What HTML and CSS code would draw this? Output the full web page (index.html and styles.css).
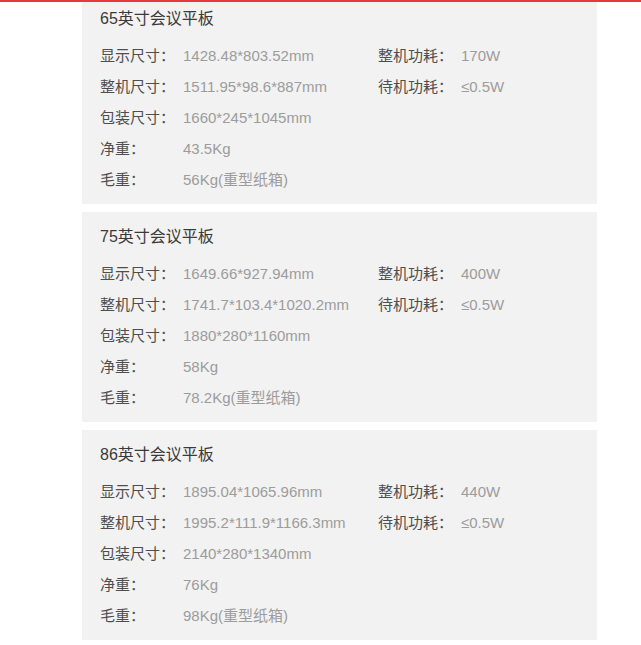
FILE: index.html
```html
<!DOCTYPE html>
<html lang="zh">
<head>
<meta charset="utf-8">
<title>会议平板参数</title>
<link rel="stylesheet" href="styles.css">
</head>
<body>
<div class="topbar"></div>
<main class="list">
  <section class="card">
    <h2 class="title">65英寸会议平板</h2>
    <div class="specs">
      <div class="item"><span class="label">显示尺寸：</span><span class="value">1428.48*803.52mm</span></div>
      <div class="item"><span class="label">整机功耗：</span><span class="value">170W</span></div>
      <div class="item"><span class="label">整机尺寸：</span><span class="value">1511.95*98.6*887mm</span></div>
      <div class="item"><span class="label">待机功耗：</span><span class="value">≤0.5W</span></div>
      <div class="item full"><span class="label">包装尺寸：</span><span class="value">1660*245*1045mm</span></div>
      <div class="item full"><span class="label">净重：</span><span class="value">43.5Kg</span></div>
      <div class="item full"><span class="label">毛重：</span><span class="value">56Kg(重型纸箱)</span></div>
    </div>
  </section>
  <section class="card">
    <h2 class="title">75英寸会议平板</h2>
    <div class="specs">
      <div class="item"><span class="label">显示尺寸：</span><span class="value">1649.66*927.94mm</span></div>
      <div class="item"><span class="label">整机功耗：</span><span class="value">400W</span></div>
      <div class="item"><span class="label">整机尺寸：</span><span class="value">1741.7*103.4*1020.2mm</span></div>
      <div class="item"><span class="label">待机功耗：</span><span class="value">≤0.5W</span></div>
      <div class="item full"><span class="label">包装尺寸：</span><span class="value">1880*280*1160mm</span></div>
      <div class="item full"><span class="label">净重：</span><span class="value">58Kg</span></div>
      <div class="item full"><span class="label">毛重：</span><span class="value">78.2Kg(重型纸箱)</span></div>
    </div>
  </section>
  <section class="card">
    <h2 class="title">86英寸会议平板</h2>
    <div class="specs">
      <div class="item"><span class="label">显示尺寸：</span><span class="value">1895.04*1065.96mm</span></div>
      <div class="item"><span class="label">整机功耗：</span><span class="value">440W</span></div>
      <div class="item"><span class="label">整机尺寸：</span><span class="value">1995.2*111.9*1166.3mm</span></div>
      <div class="item"><span class="label">待机功耗：</span><span class="value">≤0.5W</span></div>
      <div class="item full"><span class="label">包装尺寸：</span><span class="value">2140*280*1340mm</span></div>
      <div class="item full"><span class="label">净重：</span><span class="value">76Kg</span></div>
      <div class="item full"><span class="label">毛重：</span><span class="value">98Kg(重型纸箱)</span></div>
    </div>
  </section>
</main>
</body>
</html>
```
FILE: styles.css
```css
html, body {
  margin: 0;
  padding: 0;
  background: #ffffff;
}
body {
  font-family: "Liberation Sans", "Noto Sans CJK SC", sans-serif;
  overflow: hidden;
}
.topbar {
  position: fixed;
  top: 0;
  left: 0;
  right: 0;
  height: 2px;
  background: #e53a3a;
  z-index: 2;
}
.list {
  display: flex;
  flex-direction: column;
  gap: 8px;
  width: 515px;
  margin: -6px 0 0 82px;
}
.card {
  background: #f2f2f2;
  padding: 14px 18px 10px;
  height: 210px;
  box-sizing: border-box;
}
.title {
  margin: 0 0 9px;
  font-size: 16px;
  line-height: 22px;
  font-weight: normal;
  color: #3a3a3a;
  font-family: "Liberation Sans", "Noto Sans CJK SC", sans-serif;
}
.specs {
  display: grid;
  grid-template-columns: 278px 1fr;
}
.item {
  line-height: 31px;
  height: 31px;
  white-space: nowrap;
}
.item.full {
  grid-column: 1 / -1;
}
.label {
  display: inline-block;
  width: 83px;
  font-size: 15px;
  color: #4e4e4e;
  font-family: "Noto Sans CJK SC", sans-serif;
}
.value {
  font-size: 15px;
  color: #9c9c9c;
  font-family: "Liberation Sans", "Noto Sans CJK SC", sans-serif;
}
```
